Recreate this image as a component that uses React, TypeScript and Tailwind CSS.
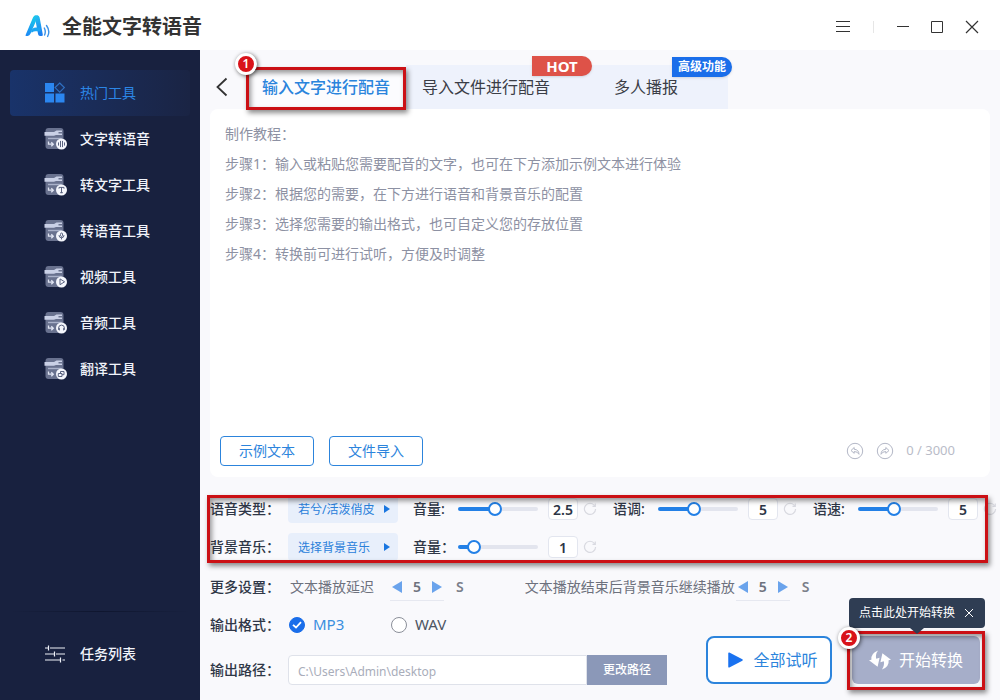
import { useState, type ReactNode } from "react";

function Logo() {
  return (
    <svg width="26" height="24" viewBox="0 0 26 24" fill="none" aria-hidden="true">
      <defs>
        <linearGradient id="logo-a" x1="3" y1="20" x2="13" y2="2" gradientUnits="userSpaceOnUse">
          <stop stopColor="#1d8cf5" />
          <stop offset="1" stopColor="#16cfe8" />
        </linearGradient>
        <linearGradient id="logo-b" x1="10" y1="2" x2="16" y2="20" gradientUnits="userSpaceOnUse">
          <stop stopColor="#22bdf0" />
          <stop offset="1" stopColor="#1b7cf0" />
        </linearGradient>
      </defs>
      <path d="M0.6 20 8 2.4Q8.8 .6 10.6 .6H13.2L11 6 5.600 18.600Q4.600 21 2.600 21H1.200Q.2 21 .6 20Z" fill="url(#logo-a)" />
      <path d="M9.600 .6H12.400Q14.200 .6 14.600 2.400L17.800 19.500Q18 21 16.600 21H15Q13.400 21 13.100 19.200L10.400 5Z" fill="url(#logo-b)" />
      <path d="M6 17Q7 12.600 11 12.600H15L15.600 16.200H10.500Q8.500 16.200 7 17.500Z" fill="#1aa5f2" />
      <path d="M19.300 13Q21.100 16.500 19.600 20M21.500 10.500Q25.500 16 22.600 21.500" stroke="#3a92e8" strokeWidth="1.400" strokeLinecap="round" />
    </svg>
  );
}

function HotIcon() {
  return (
    <svg width="22" height="22" viewBox="0 0 22 22" aria-hidden="true">
      <path d="M1 1H10V10H1ZM1 11.500H10V20.500H1ZM11.500 11.500H20.500V20.500H11.500Z" fill="#2b86f0" />
      <path d="M15.700 1 20.300 5.600 15.700 10.200 11.100 5.600Z" fill="none" stroke="#2f6fc0" strokeWidth="1.200" />
    </svg>
  );
}

function ToolIcon({ children }: { children: ReactNode }) {
  return (
    <svg width="24" height="24" viewBox="0 0 24 24" fill="none" aria-hidden="true">
      <rect x="1.500" y="1" width="18" height="21" rx="3" fill="#69728f" />
      <path d="M.5 5H10L12.500 3.500H18V5H14.500V6.500H18V8H12L10 8.800H.5Z" fill="#c9d0e6" />
      <path d="M4 11.500H17.500" stroke="#aab2ca" strokeWidth="1.400" />
      <path d="M4.500 14.500V17.200H9M7.300 15.200 9.300 17.200 7.300 19.200" stroke="#dfe4f2" strokeWidth="1.300" />
      <circle cx="17.500" cy="17" r="5.500" fill="#f4f6fc" />
      <g stroke="#5a6380" strokeWidth="1" strokeLinecap="round" strokeLinejoin="round">{children}</g>
    </svg>
  );
}

const tools = [
  { name: "文字转语音", glyph: <path d="M14.500 15.800V18.200M16.500 14.300V19.700M18.500 14.300V19.700M20.500 15.800V18.200" /> },
  { name: "转文字工具", glyph: <path d="M15 15.300V14.400H20V15.300M17.500 14.400V19.700M16.500 19.700H18.500" /> },
  { name: "转语音工具", glyph: <path d="M16.500 15a1 1 0 0 1 2 0v1.500a1 1 0 0 1-2 0ZM15 16.500a2.500 2.300 0 0 0 5 0M17.500 18.800V20" /> },
  { name: "视频工具", glyph: <path d="M16 14.300V19.700L20.300 17Z" /> },
  { name: "音频工具", glyph: <path d="M14.600 18.500V17a2.900 2.900 0 0 1 5.800 0V18.500M15.400 17.500V19M19.600 17.500V19" /> },
  { name: "翻译工具", glyph: <path d="M14.700 16.500H18V19.500H14.700ZM16.500 16.300V14.500H20V17.700H18.200" /> },
];

function Sidebar() {
  return (
    <aside className="flex w-[200px] shrink-0 flex-col bg-[#18213f] px-2.5 pt-5 pb-1 text-sm font-medium text-[#f0f3fa]">
      <nav className="flex flex-col">
        <a href="#hot" className="flex h-[46px] items-center gap-3 rounded bg-linear-to-r from-[#19336a] to-[#1a2444] pl-[34px] font-normal text-[#2c86e6]">
          <span className="flex w-6"><HotIcon /></span>
          热门工具
        </a>
        {tools.map((t) => (
          <a key={t.name} href="#tool" className="flex h-[46px] items-center gap-3 pl-[34px]">
            <ToolIcon>{t.glyph}</ToolIcon>
            {t.name}
          </a>
        ))}
      </nav>
      <div className="mt-auto">
        <div className="h-px bg-linear-to-r from-[#18213f] via-[#0f162f] to-[#18213f]" />
        <a href="#tasks" className="flex h-[84px] items-center gap-3 pl-[34px]">
          <svg width="24" height="20" viewBox="0 0 24 20" fill="none" stroke="#eef1f8" strokeWidth="1.200" aria-hidden="true">
            <path d="M1 4H4M6 4H21M4.500 1.500V6.500M1 10H10M12 10H21M10.500 7.500V12.500M1 16H16M18.500 16H21M16.500 13.500V18.500" />
          </svg>
          任务列表
        </a>
      </div>
    </aside>
  );
}

function Header() {
  return (
    <header className="flex h-[50px] items-center bg-white pt-1 pr-[21px] pl-[25px]">
      <Logo />
      <h1 className="ml-[11px] text-xl font-bold text-[#333]">全能文字转语音</h1>
      <div className="ml-auto flex items-center text-[#333]">
        <button aria-label="菜单">
          <svg width="16" height="14" viewBox="0 0 16 14" stroke="currentColor" strokeWidth="1.200"><path d="M1 1.500H15M1 6.500H15M1 11.500H15" /></svg>
        </button>
        <span className="mx-[22px] h-3 w-px bg-[#e6e6e6]" />
        <button aria-label="最小化">
          <svg width="14" height="14" viewBox="0 0 14 14" stroke="currentColor"><path d="M1 6.500H13" /></svg>
        </button>
        <button aria-label="最大化" className="ml-5">
          <svg width="14" height="14" viewBox="0 0 14 14" fill="none" stroke="currentColor"><path d="M1.500 1.500H12.500V12.500H1.500Z" /></svg>
        </button>
        <button aria-label="关闭" className="ml-[21px]">
          <svg width="14" height="14" viewBox="0 0 14 14" stroke="currentColor" strokeWidth="1.200"><path d="M1 1 13 13M13 1 1 13" /></svg>
        </button>
      </div>
    </header>
  );
}

function Frame({ className }: { className: string }) {
  return (
    <div
      aria-hidden="true"
      className={
        "pointer-events-none absolute border-3 border-[#cb1015] shadow-[2px_3px_5px_rgba(0,0,0,0.45),inset_2px_3px_5px_rgba(0,0,0,0.4)] " +
        className
      }
    />
  );
}

function StepMark({ n, className }: { n: number; className: string }) {
  return (
    <span
      className={
        "pointer-events-none absolute flex size-[22px] items-center justify-center rounded-full border-3 border-white bg-[#d9131a] text-xs font-semibold text-white shadow-[1px_1px_4px_rgba(0,0,0,0.6)] " +
        className
      }
    >
      {n}
    </span>
  );
}

function Tabs() {
  return (
    <div className="flex items-stretch pt-[15px]">
      <button aria-label="返回" className="flex w-9 items-center pl-1.5">
        <svg width="12" height="20" viewBox="0 0 12 20" fill="none" stroke="#333" strokeWidth="1.800"><path d="M10.500 1.500 1.500 10 10.500 18.500" /></svg>
      </button>
      <div role="tablist" className="flex h-11 text-base text-[#3a3d46]">
        <div className="relative">
          <button role="tab" aria-selected="true" className="h-full w-40 bg-[#fcfcfe] font-medium text-[#2a84dc]">输入文字进行配音</button>
          <Frame className="inset-x-0 top-0.5 -bottom-px z-10" />
          <StepMark n={1} className="-top-3 -left-[11px] z-10" />
        </div>
        <div className="relative">
          <button role="tab" aria-selected="false" className="h-full w-40 bg-[#eef2fc]">导入文件进行配音</button>
          <span className="absolute -top-[9px] left-[126px] z-10 flex h-5 w-[60px] items-center justify-center rounded-tl-md rounded-r-full bg-[#de5248] text-[15px] font-bold text-white shadow-sm">HOT</span>
        </div>
        <div className="relative">
          <button role="tab" aria-selected="false" className="h-full w-[162px] bg-[#eef2fc] pr-0.5">多人播报</button>
          <span className="absolute -top-2 left-[106px] flex h-5 w-[60px] items-center justify-center rounded-tl-md rounded-r-full bg-[#1a6eea] text-xs font-bold text-white shadow-sm">高级功能</span>
        </div>
      </div>
    </div>
  );
}

const tutorial = [
  "制作教程：",
  "步骤1：输入或粘贴您需要配音的文字，也可在下方添加示例文本进行体验",
  "步骤2：根据您的需要，在下方进行语音和背景音乐的配置",
  "步骤3：选择您需要的输出格式，也可自定义您的存放位置",
  "步骤4：转换前可进行试听，方便及时调整",
].join("\n");

function Editor() {
  const [text, setText] = useState("");
  return (
    <section className="mr-2.5 flex flex-1 flex-col rounded-lg bg-white pt-2.5 pb-[11px]">
      <textarea
        aria-label="配音文字"
        value={text}
        maxLength={3000}
        onChange={(e) => setText(e.target.value)}
        placeholder={tutorial}
        className="min-h-40 flex-1 resize-none px-[15px] text-sm leading-[30px] text-[#3a3d46] outline-none placeholder:text-[#8d91a3]"
      />
      <div className="flex items-center pr-[35px] pl-2.5">
        <button className="h-[30px] w-[94px] rounded-sm border border-[#2c84dc] text-sm text-[#2c84dc]">示例文本</button>
        <button className="ml-[15px] h-[30px] w-[94px] rounded-sm border border-[#2c84dc] text-sm text-[#2c84dc]">文件导入</button>
        <div className="ml-auto flex items-center gap-3 text-[#b3b7c6]">
          <button aria-label="撤销">
            <svg width="18" height="18" viewBox="0 0 18 18" fill="none" stroke="currentColor"><circle cx="9" cy="9" r="7.700" /><path d="M8.200 5.500 5 8.500 8.200 11.300V9.500Q11.500 9.500 13 12.300 12.800 7.500 8.200 7.300Z" strokeLinejoin="round" /></svg>
          </button>
          <button aria-label="重做">
            <svg width="18" height="18" viewBox="0 0 18 18" fill="none" stroke="currentColor"><circle cx="9" cy="9" r="7.700" /><path d="M9.800 5.500 13 8.500 9.800 11.300V9.500Q6.500 9.500 5 12.300 5.200 7.500 9.800 7.300Z" strokeLinejoin="round" /></svg>
          </button>
          <span className="text-[13px] text-[#b9bcc8]">{text.length} / 3000</span>
        </div>
      </div>
    </section>
  );
}

function PickList({ label, value }: { label: string; value: string }) {
  return (
    <div className="grid w-[110px] items-center">
      <select aria-label={label} defaultValue={value} className="col-start-1 row-start-1 h-7 appearance-none rounded-sm bg-[#e8effb] pt-0.5 pr-5 pl-2.5 text-xs text-[#2a80da] outline-none">
        <option>{value}</option>
      </select>
      <svg width="6" height="8" viewBox="0 0 6 8" className="pointer-events-none col-start-1 row-start-1 mr-2 justify-self-end" fill="#1a76e0" aria-hidden="true"><path d="M0 0 6 4 0 8Z" /></svg>
    </div>
  );
}

type DialProps = { label: string; initial: number; min: number; max: number };

function Dial({ label, initial, min, max }: DialProps) {
  const [value, setValue] = useState(initial);
  const filled = ((value - min) / (max - min)) * 100;
  return (
    <div className="flex items-center">
      <span className="w-[45px] shrink-0 font-medium whitespace-nowrap">{label}</span>
      <input
        type="range"
        aria-label={label}
        min={min}
        max={max}
        step="0.1"
        value={value}
        onChange={(e) => setValue(Number(e.target.value))}
        style={{ backgroundImage: `linear-gradient(to right, #2380e6 ${filled}%, #e3e5ee ${filled}%)` }}
        className="h-1 w-20 appearance-none rounded-full [&::-webkit-slider-thumb]:size-3.5 [&::-webkit-slider-thumb]:appearance-none [&::-webkit-slider-thumb]:rounded-full [&::-webkit-slider-thumb]:border-2 [&::-webkit-slider-thumb]:border-[#2380e6] [&::-webkit-slider-thumb]:bg-white"
      />
      <input
        type="text"
        aria-label={label + "数值"}
        value={value}
        onChange={(e) => setValue(Number(e.target.value) || min)}
        className="ml-2.5 h-[22px] w-[30px] rounded-sm border border-[#e3e6ef] bg-white text-center text-sm font-semibold text-[#2b3445] outline-none"
      />
      <button aria-label={label + "重置"} onClick={() => setValue(initial)} className="ml-1">
        <svg width="16" height="14" viewBox="0 0 16 14" fill="none" stroke="#d9dae1" strokeWidth="1.200"><path d="M12.500 3.500A5.600 5.600 0 1 0 13.600 7M13.300 1.500V4.300H10.500" /></svg>
      </button>
    </div>
  );
}

function Stepper({ label }: { label: string }) {
  const [n, setN] = useState(5);
  return (
    <div className="flex h-7 w-[54px] items-center justify-between border-b border-[#e6e8f0] px-0.5">
      <button aria-label={label + "减少"} onClick={() => setN(Math.max(0, n - 1))}>
        <svg width="10" height="12" viewBox="0 0 10 12" fill="#6aa3ec"><path d="M10 0V12L0 6Z" /></svg>
      </button>
      <input type="text" aria-label={label} readOnly value={n} className="w-4 bg-transparent text-center text-sm font-semibold text-[#6d717d] outline-none" />
      <button aria-label={label + "增加"} onClick={() => setN(n + 1)}>
        <svg width="10" height="12" viewBox="0 0 10 12" fill="#6aa3ec"><path d="M0 0V12L10 6Z" /></svg>
      </button>
    </div>
  );
}

function Format({ name, value, onPick }: { name: string; value: string; onPick: (v: string) => void }) {
  return (
    <label className="flex w-[102px] items-center gap-2 text-[15px] text-[#4d5563] has-checked:text-[#3a8fdf]">
      <span className="grid place-items-center">
        <input
          type="radio"
          name="format"
          checked={name === value}
          onChange={() => onPick(name)}
          className="col-start-1 row-start-1 size-4 appearance-none rounded-full border border-[#8b8f99] bg-white checked:border-[#1a6eea] checked:bg-[#1a6eea]"
        />
        <svg width="10" height="8" viewBox="0 0 10 8" fill="none" stroke="#fff" strokeWidth="1.800" className="pointer-events-none col-start-1 row-start-1" aria-hidden="true"><path d="M1 3.800 4 6.500 9 1.200" /></svg>
      </span>
      {name}
    </label>
  );
}

function Actions() {
  return (
    <div className="ml-auto flex shrink-0 items-end gap-5 pr-5 pb-3">
      <button className="flex h-12 w-[126px] items-center justify-center gap-2.5 rounded-lg border-2 border-[#2c84dc] bg-white pl-2 text-base text-[#2c84dc]">
        <svg width="15" height="16" viewBox="0 0 15 16" fill="#1a72f0" stroke="#1a72f0" strokeWidth="1.500" strokeLinejoin="round" aria-hidden="true"><path d="M1 1.200 14 8 1 14.800Z" /></svg>
        全部试听
      </button>
      <div className="relative">
        <button className="flex h-12 w-32 items-center justify-center gap-2 rounded-md bg-[#a6aec9] text-base text-white">
          <svg width="22" height="20" viewBox="0 0 22 20" fill="#fff" aria-hidden="true">
            <path d="M9 .5Q1.500 3.500 2.400 9.800L0 10.300 8.600 16.800 10.600 7.800 7.200 8.700Q6.200 4.500 9 .5Z" />
            <path d="M13 19.500Q20.500 16.500 19.600 10.200L22 9.700 13.400 3.200 11.400 12.200 14.800 11.300Q15.800 15.500 13 19.500Z" />
          </svg>
          开始转换
        </button>
        <Frame className="-inset-x-[5px] -top-[5px] -bottom-1.5" />
        <div className="absolute -top-[38px] -left-[3px] flex h-[30px] w-[136px] items-center justify-between rounded bg-[#2f3d53] px-[10px] text-xs text-white">
          点击此处开始转换
          <button aria-label="关闭提示">
            <svg width="12" height="12" viewBox="0 0 12 12" stroke="#fff"><path d="M2 2 10 10M10 2 2 10" /></svg>
          </button>
          <svg width="14" height="6" viewBox="0 0 14 6" className="absolute top-full left-[61px]" fill="#2f3d53" aria-hidden="true"><path d="M0 0H14L7 6Z" /></svg>
        </div>
        <StepMark n={2} className="-top-[9px] -left-[14px]" />
      </div>
    </div>
  );
}

function Settings() {
  const [format, setFormat] = useState("MP3");
  return (
    <section className="pt-[15px] pb-1 text-sm text-[#2f3747]">
      <div className="relative">
        <div className="flex h-[34px] items-center">
          <span className="w-[78px] shrink-0 font-medium">语音类型：</span>
          <PickList label="语音类型" value="若兮/活泼俏皮" />
          <div className="ml-[15px] flex gap-[15px]">
            <Dial label="音量:" initial={2.5} min={0.4} max={5} />
            <Dial label="语调:" initial={5} min={1} max={10} />
            <Dial label="语速:" initial={5} min={1} max={10} />
          </div>
        </div>
        <div className="flex h-[42px] items-center">
          <span className="w-[78px] shrink-0 font-medium">背景音乐：</span>
          <PickList label="背景音乐" value="选择背景音乐" />
          <div className="ml-[15px]">
            <Dial label="音量：" initial={1} min={0.4} max={5} />
          </div>
        </div>
        <Frame className="top-[3px] right-3 bottom-[5px] -left-[3px]" />
      </div>
      <div className="flex h-[38px] items-center">
        <span className="w-20 shrink-0 font-medium">更多设置：</span>
        <span className="text-[#6d717d]">文本播放延迟</span>
        <div className="ml-4 flex items-center gap-3 font-semibold text-[#7b7f8a]"><Stepper label="文本播放延迟" />S</div>
        <span className="ml-[61px] text-[#6d717d]">文本播放结束后背景音乐继续播放</span>
        <div className="ml-px flex items-center gap-3 font-semibold text-[#7b7f8a]"><Stepper label="背景音乐继续播放" />S</div>
      </div>
      <div className="flex">
        <div className="flex flex-col">
          <div role="radiogroup" aria-label="输出格式" className="flex h-[38px] items-center">
            <span className="w-[79px] shrink-0 font-medium">输出格式：</span>
            <Format name="MP3" value={format} onPick={setFormat} />
            <Format name="WAV" value={format} onPick={setFormat} />
          </div>
          <div className="flex h-[52px] items-center">
            <label htmlFor="path" className="w-[78px] shrink-0 font-medium">输出路径：</label>
            <input id="path" type="text" defaultValue="C:\Users\Admin\desktop" className="h-[30px] w-[299px] rounded-l-sm border border-[#dfe2ea] bg-white px-[9px] pt-0.5 text-xs text-[#a9adba] outline-none" />
            <button className="h-[30px] w-20 bg-[#8b98b8] text-xs font-medium text-white">更改路径</button>
          </div>
        </div>
        <Actions />
      </div>
    </section>
  );
}

export default function App() {
  return (
    <div className="flex min-h-screen flex-col bg-[#f9f9fc] font-['Noto_Sans','Noto_Sans_CJK_SC',sans-serif]">
      <Header />
      <div className="flex flex-1">
        <Sidebar />
        <main className="flex min-w-0 flex-1 flex-col pl-2.5">
          <Tabs />
          <Editor />
          <Settings />
        </main>
      </div>
    </div>
  );
}
